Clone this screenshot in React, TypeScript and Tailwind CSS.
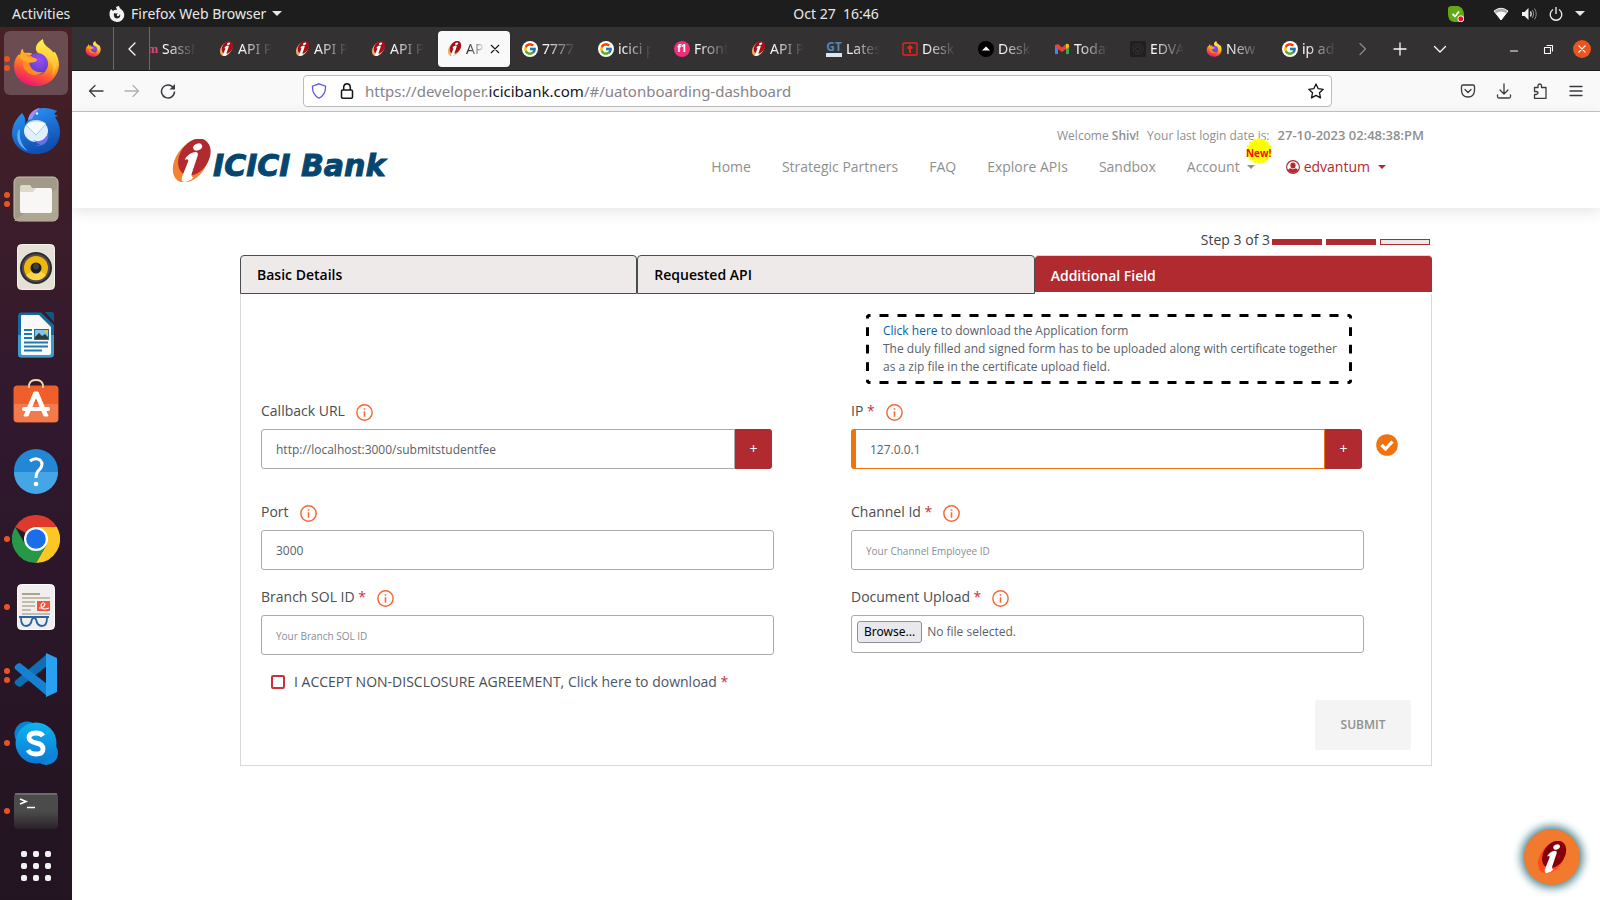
import type { ReactNode } from "react";
import { FcGoogle } from "react-icons/fc";

/* ---------- small pictures ---------- */

function FirefoxLogo({ className }: { className: string }) {
  return (
    <svg viewBox="0 0 46 48" className={className} aria-hidden="true">
      <defs>
        <linearGradient id="ffBody" x1="0.75" y1="0.1" x2="0.3" y2="1">
          <stop offset="0" stopColor="#ffe23a" />
          <stop offset="0.35" stopColor="#ff9a1f" />
          <stop offset="0.65" stopColor="#ff4f3a" />
          <stop offset="1" stopColor="#e8127a" />
        </linearGradient>
        <radialGradient id="ffGlobe" cx="0.6" cy="0.3" r="0.8">
          <stop offset="0" stopColor="#9a4bff" />
          <stop offset="1" stopColor="#4a3fae" />
        </radialGradient>
        <linearGradient id="ffTail" x1="0.5" y1="0" x2="0.5" y2="1">
          <stop offset="0" stopColor="#fff04d" />
          <stop offset="1" stopColor="#ffb02e" />
        </linearGradient>
      </defs>
      <path d="M8 12C9 10 9.500 10 10 10C10 13 11 14 13 14C16 13 19 14 22 17L42 13C45 18 46 22 46 26C45 39 35 47 23 47C11 47 1 39 1 27C1 22 3 18 6 15C6 16 6.500 16 7 16Z" fill="url(#ffBody)" />
      <path d="M23 11C22 5 27 2 30 0C30 7 36 8 40 13C45 19 45 30 39 37C42 30 39 24 36 20C31 17 25 16 23 11Z" fill="url(#ffTail)" />
      <circle cx="24" cy="25" r="11" fill="url(#ffGlobe)" />
      <path d="M13 15C18 16 20 19 24 20C23 23 19 23 16 23C17 30 22 34 30 33C25 38 15 37 11 29C9 24 9 19 13 15Z" fill="#ff8a26" />
      <path d="M6 16C10 14 13 15 15 18C20 19 23 19 24 21C23 24 18 23 16 24C12 21 8 23 6 16Z" fill="#ffa92b" />
    </svg>
  );
}

function ThunderbirdLogo() {
  return (
    <svg viewBox="0 0 48 48" className="size-12" aria-hidden="true">
      <defs>
        <linearGradient id="tb" x1="0" y1="0" x2="0.4" y2="1">
          <stop offset="0" stopColor="#2f9bff" />
          <stop offset="1" stopColor="#0f4fb0" />
        </linearGradient>
      </defs>
      <path d="M10 6C5 11 0 17 0 27C1 39 11 47 24 47C38 47 48 38 48 25C48 18 45 13 43 10L46 9L42 7L45 4C38 1 31 0 25 2C20 4 17 8 16 13L13 18C14 13 13 10 10 6Z" fill="url(#tb)" />
      <path d="M16 13C17 7 21 2 28 1C24 4 22 8 20 12Z" fill="#a58cf5" />
      <path d="M6 24C3 34 9 41 16 44C9 38 7 31 8 22Z" fill="#5fb2ff" />
      <ellipse cx="24" cy="24" rx="12" ry="11" fill="#dff1ff" />
      <path d="M14 18L24 28L34 17C31 13 18 12 14 18Z" fill="#f6fbff" stroke="#8fbdf0" strokeWidth="0.8" />
      <path d="M21 33C27 36 34 33 36 26C38 33 32 41 23 38L28 38Z" fill="#6c6de8" />
      <circle cx="25" cy="6.500" r="1.200" fill="#eaf6ff" />
    </svg>
  );
}

function FilesLogo() {
  return (
    <svg viewBox="0 0 46 46" className="size-[46px]" aria-hidden="true">
      <rect x="1" y="1" width="44" height="44" rx="5" fill="#a19a88" stroke="#c9c2b0" />
      <path d="M1 45L45 12V40Q45 45 40 45Z" fill="#aea793" />
      <path d="M7 11Q7 9 9 9H17L19 12H24V20H7Z" fill="#dedacb" />
      <path d="M7 16H20L23 12H37Q39 12 39 14V35Q39 37 37 37H9Q7 37 7 35Z" fill="#f8f7f5" />
    </svg>
  );
}

function RhythmboxLogo() {
  return (
    <svg viewBox="0 0 38 46" className="h-[46px] w-[38px]" aria-hidden="true">
      <rect x="0.500" y="0.500" width="37" height="45" rx="4" fill="#e6e1d6" stroke="#f5f2eb" />
      <circle cx="19" cy="24" r="16" fill="#2a2d33" />
      <circle cx="19" cy="24" r="14" fill="#5a4a4d" />
      <circle cx="19" cy="24" r="12" fill="#ecb90c" />
      <path d="M9 31A12 12 0 0 0 29 31L19 24Z" fill="#ffd54a" />
      <circle cx="19" cy="24" r="5.500" fill="#1d1f22" />
      <circle cx="19" cy="22.500" r="3" fill="#3d4045" />
    </svg>
  );
}

function WriterLogo() {
  return (
    <svg viewBox="0 0 38 46" className="h-[46px] w-[38px]" aria-hidden="true">
      <path d="M4 0.500H24L37 13V42Q37 45.500 33 45.500H4Q1 45.500 1 42V4Q1 0.500 4 0.500Z" fill="#17689f" />
      <path d="M1 23H37V42Q37 45.500 33 45.500H4Q1 45.500 1 42Z" fill="#3c9bc9" />
      <path d="M28 0H35Q37 0 37 2V10Z" fill="#0d5a83" />
      <path d="M5 3H22L34 15V41Q34 43 32 43H6Q4 43 4 41V4Q4 3 5 3Z" fill="#f9fafa" />
      <path d="M7 18H15M7 22H15M7 26H15M7 30.500H31M7 34.500H31M7 38.500H25" stroke="#2079b0" strokeWidth="1.800" />
      <rect x="17.500" y="17.500" width="14" height="10" fill="#80c4e8" stroke="#1d6fa5" />
      <path d="M18 27V25L22 21L25 24L28 22L31 25V27Z" fill="#2f3b3f" />
      <circle cx="29.500" cy="19.500" r="1.500" fill="#f4c430" />
    </svg>
  );
}

function SoftwareLogo() {
  return (
    <svg viewBox="0 0 46 48" className="h-12 w-[46px]" aria-hidden="true">
      <rect x="0.500" y="6.500" width="45" height="37" rx="4" fill="#ee5f2c" />
      <path d="M1 25H45V40Q45 43 42 43H4Q1 43 1 40Z" fill="#f27a4d" />
      <path d="M16 9V6Q17 1 23 1Q29 1 30 6V9" fill="none" stroke="#f2d8b0" strokeWidth="1.800" />
      <path d="M21 13H25L35 37H31L23 18L15 37H11Z" fill="#fff" stroke="#fff" />
      <rect x="9" y="28" width="28" height="4" rx="2" fill="#fff" />
    </svg>
  );
}

function HelpLogo() {
  return (
    <svg viewBox="0 0 46 46" className="size-[46px]" aria-hidden="true">
      <circle cx="23" cy="23" r="22" fill="#2487d6" />
      <path d="M1 24A22 22 0 0 0 45 24Z" fill="#46a5e4" />
      <path d="M17 13Q22 9 27 12Q31 16 27 21Q23 24 23 30" fill="none" stroke="#fff" strokeWidth="3" />
      <circle cx="23" cy="36" r="2.300" fill="#fff" />
    </svg>
  );
}

function ChromeLogo() {
  return (
    <svg viewBox="0 0 48 48" className="size-12" aria-hidden="true">
      <path d="M24 24L3.200 12A24 24 0 0 1 44.800 12Z" fill="#dd3a2e" />
      <path d="M24 12H44.800A24 24 0 0 1 24 48L34.400 30Z" fill="#fcc624" />
      <path d="M3.200 12L13.600 30L24 36L34.400 30L24 48A24 24 0 0 1 3.200 12Z" fill="#279847" />
      <circle cx="24" cy="24" r="12" fill="#fff" />
      <circle cx="24" cy="24" r="9.800" fill="#1a6fe8" />
    </svg>
  );
}

function DocumentViewerLogo() {
  return (
    <svg viewBox="0 0 38 46" className="h-[46px] w-[38px]" aria-hidden="true">
      <rect x="0.500" y="0.500" width="37" height="45" rx="4" fill="#f1efed" stroke="#fff" />
      <path d="M5 10H23" stroke="#a59b84" strokeWidth="1.800" />
      <path d="M5 14H33M5 18H18M5 22H18M5 26H14M5 30H33" stroke="#c2bcae" strokeWidth="1.800" />
      <rect x="20" y="17" width="13" height="10" fill="#f0533f" />
      <path d="M22 24Q27 24 28 20Q26 17 24 21Q24 27 32 24" fill="none" stroke="#fff" strokeWidth="1.100" />
      <path d="M2 33H32M4 34Q4 42 9 42Q14 42 15 35M19 35Q20 42 25 42Q30 42 30 34M15 35Q17 33 19 35" fill="none" stroke="#2d62a3" strokeWidth="1.800" />
    </svg>
  );
}

function VsCodeLogo() {
  return (
    <svg viewBox="0 0 44 44" className="size-11" aria-hidden="true">
      <path d="M1 28L33 1V13L6 34Q4 34 1 31Q0 29 1 28Z" fill="#0d6fb5" />
      <path d="M1 13Q3 10 6 10L33 31V43L1 16Q0 14 1 13Z" fill="#1482d0" />
      <path d="M32 0L43 5V39L32 44Z" fill="#2aa0f2" />
    </svg>
  );
}

function SkypeLogo() {
  return (
    <svg viewBox="0 0 44 44" className="size-11" aria-hidden="true">
      <defs>
        <linearGradient id="sk" x1="0" y1="0" x2="0" y2="1">
          <stop offset="0" stopColor="#10b3f0" />
          <stop offset="1" stopColor="#0a78d4" />
        </linearGradient>
      </defs>
      <circle cx="13" cy="13" r="12.500" fill="#0a82cf" />
      <circle cx="32" cy="32" r="12" fill="#1183d6" />
      <circle cx="22" cy="22" r="20.500" fill="url(#sk)" />
      <path d="M29 15Q27 12 22 12Q15 12 15 17Q15 20 22 22Q29 23 29 28Q29 33 22 33Q16 33 14 29" fill="none" stroke="#fff" strokeWidth="4.800" />
    </svg>
  );
}

function TerminalLogo() {
  return (
    <svg viewBox="0 0 46 38" className="h-[38px] w-[46px]" aria-hidden="true">
      <defs>
        <linearGradient id="tm" x1="0" y1="0" x2="0" y2="1">
          <stop offset="0.5" stopColor="#4b4b4b" />
          <stop offset="1" stopColor="#2a2229" />
        </linearGradient>
      </defs>
      <rect x="1" y="1" width="44" height="36" rx="4" fill="url(#tm)" />
      <path d="M2 2H44" stroke="#777" strokeWidth="1.500" />
      <path d="M7 7L13 9.500L7 12M14 15.500H22" fill="none" stroke="#fff" strokeWidth="1.600" />
    </svg>
  );
}

function Emblem({ className, disc, edge }: { className: string; disc: string; edge: string }) {
  return (
    <svg viewBox="0 0 117 129" className={className} aria-hidden="true">
      <ellipse cx="57" cy="67" rx="46" ry="70" transform="rotate(34 57 67)" fill={edge} />
      <ellipse cx="67" cy="54" rx="43" ry="60" transform="rotate(34 67 54)" fill={disc} />
      <ellipse cx="77" cy="24" rx="14" ry="10" transform="rotate(-25 77 24)" fill="#fff" />
      <path d="M38 62Q50 41 70 39Q80 39 77 50L59 104Q57 114 65 115Q54 128 37 129Q26 128 30 114L49 66Q50 58 38 62Z" fill="#fff" />
    </svg>
  );
}

function GmailLogo() {
  return (
    <svg viewBox="0 0 16 16" className="size-4" aria-hidden="true">
      <path d="M1 4V13H4V6Z" fill="#4285f4" />
      <path d="M15 4V13H12V6Z" fill="#34a853" />
      <path d="M1 4L4 3L8 6.500L12 3L15 4V6L8 11L1 6Z" fill="#ea4335" />
      <path d="M12 3Q15 2 15 5V6L12 8Z" fill="#fbbc04" />
    </svg>
  );
}

function Caret({ className }: { className: string }) {
  return (
    <svg viewBox="0 0 8 4" className={className} aria-hidden="true">
      <path d="M0 0H8L4 4Z" fill="currentColor" />
    </svg>
  );
}

function Stroke({ d, className, width = 1.3 }: { d: string; className: string; width?: number }) {
  return (
    <svg viewBox="0 0 16 16" className={className} fill="none" stroke="currentColor" strokeWidth={width} strokeLinecap="round" strokeLinejoin="round" aria-hidden="true">
      <path d={d} />
    </svg>
  );
}

/* ---------- desktop ---------- */

function TopBar() {
  return (
    <header className="flex h-[27px] shrink-0 items-center bg-[#1d1d1d] text-sm text-[#e8e8e8]">
      <button className="w-[72px] shrink-0 pl-3 text-left whitespace-nowrap">Activities</button>
      <div className="grid flex-1 grid-cols-[1fr_auto_1fr] items-center">
        <button className="flex items-center gap-[6px] pl-[37px] whitespace-nowrap">
          <svg viewBox="0 0 16 16" className="size-4" aria-hidden="true">
            <path d="M2 3L4 5Q6 3 8 4L7 1Q9 0 10 0Q10 2 13 4Q16 7 15 11Q13 16 8 16Q1 15 0.500 9Q0 6 2 3Z" fill="#f2f2f2" />
            <path d="M5 7Q7 8 9 7Q7 9 8 10Q10 11 11 8Q12 12 8 12.500Q4 12 5 7Z" fill="#1d1d1d" />
          </svg>
          Firefox Web Browser
          <Caret className="h-[5px] w-[10px]" />
        </button>
        <button className="whitespace-pre">Oct 27  16:46</button>
        <div className="flex items-center justify-end pr-[15px]">
          <svg viewBox="0 0 16 16" className="mr-[29px] size-4" aria-hidden="true">
            <path d="M0 3Q0 0 4 0H10Q15 1 16 8V12Q15 16 11 16H6Q0 15 0 8Z" fill="#63a816" />
            <path d="M4.500 8L7 10.500L11 5.500" fill="none" stroke="#fff" strokeWidth="1.800" />
            <circle cx="12.800" cy="12.800" r="3" fill="#e81123" stroke="#fff" />
          </svg>
          <svg viewBox="0 0 16 14" className="mr-3 h-[14px] w-4" aria-hidden="true">
            <path d="M1 4Q8 -1.500 15 4L8 13Z" fill="#aaa" stroke="#f2f2f2" />
            <path d="M3 6Q8 3 13 6L8 13Z" fill="#fff" />
          </svg>
          <svg viewBox="0 0 16 14" className="mr-3 h-[14px] w-4" aria-hidden="true">
            <path d="M1 5H3.500L7.500 1V13L3.500 9H1Z" fill="#f2f2f2" />
            <path d="M9.500 4.500Q11 7 9.500 9.500" fill="none" stroke="#f2f2f2" strokeWidth="1.400" />
            <path d="M11.500 3Q14 7 11.500 11M13.500 1.500Q17 7 13.500 12.500" fill="none" stroke="#888" />
          </svg>
          <svg viewBox="0 0 14 14" className="mr-3 size-[14px]" fill="none" stroke="#f2f2f2" strokeWidth="1.300" aria-hidden="true">
            <path d="M4 2.500A5.800 5.800 0 1 0 10 2.500M7 0V7" />
          </svg>
          <Caret className="h-[5px] w-[10px]" />
        </div>
      </div>
    </header>
  );
}

const dock: { name: string; icon: ReactNode; windows: number; active?: boolean }[] = [
  { name: "Firefox", icon: <FirefoxLogo className="h-12 w-[46px]" />, windows: 2, active: true },
  { name: "Thunderbird", icon: <ThunderbirdLogo />, windows: 0 },
  { name: "Files", icon: <FilesLogo />, windows: 2 },
  { name: "Rhythmbox", icon: <RhythmboxLogo />, windows: 0 },
  { name: "Writer", icon: <WriterLogo />, windows: 0 },
  { name: "Software", icon: <SoftwareLogo />, windows: 0 },
  { name: "Help", icon: <HelpLogo />, windows: 0 },
  { name: "Chrome", icon: <ChromeLogo />, windows: 1 },
  { name: "Document Viewer", icon: <DocumentViewerLogo />, windows: 1 },
  { name: "Code", icon: <VsCodeLogo />, windows: 2 },
  { name: "Skype", icon: <SkypeLogo />, windows: 1 },
  { name: "Terminal", icon: <TerminalLogo />, windows: 1 },
];

function Dock() {
  return (
    <nav aria-label="Dock" className="flex w-[72px] shrink-0 flex-col items-center bg-linear-to-b from-[#472125] via-[#30182e] via-45% to-[#221420] pt-[2px]">
      {dock.map((app) => (
        <button key={app.name} aria-label={app.name} className="relative flex h-[68px] w-full items-center justify-center px-1">
          <span className={app.active ? "flex size-16 items-center justify-center rounded-md bg-white/20" : "flex size-16 items-center justify-center"}>{app.icon}</span>
          <span className="absolute inset-y-0 left-1 flex flex-col justify-center gap-[3px]">
            {Array.from({ length: app.windows }, (_, i) => (
              <span key={i} className="size-[6px] rounded-full bg-[#e95420]" />
            ))}
          </span>
        </button>
      ))}
      <button aria-label="Show Applications" className="grid grid-cols-3 gap-[6px] py-[6px]">
        {Array.from({ length: 9 }, (_, i) => (
          <span key={i} className="size-[6px] rounded-[2px] bg-[#f2f2f2]" />
        ))}
      </button>
    </nav>
  );
}

/* ---------- browser chrome ---------- */

const google = <span className="flex size-4 items-center justify-center rounded-full bg-white"><FcGoogle className="size-[14px]" /></span>;
const bank = <Emblem className="size-[15px]" disc="#a31116" edge="#f3a56a" />;
const triangle = (
  <span className="flex size-4 items-center justify-center rounded-full bg-black"><Caret className="h-[7px] w-2 rotate-180 text-white" /></span>
);

const tabs: { icon: ReactNode; text: string; active?: boolean }[] = [
  { icon: <span className="w-4 text-right font-['Liberation_Serif',serif] text-[13px] leading-4 font-bold text-[#cf4a83]">m</span>, text: "SassM" },
  { icon: bank, text: "API P" },
  { icon: bank, text: "API P" },
  { icon: bank, text: "API P" },
  { icon: bank, text: "API", active: true },
  { icon: google, text: "7777" },
  { icon: google, text: "icici p" },
  { icon: <span className="flex size-4 items-center justify-center rounded-full bg-[#f02e7a] text-[10px] font-bold text-white">f1</span>, text: "Front" },
  { icon: bank, text: "API P" },
  { icon: <span className="w-4 border-b-4 border-[#dce6f0] text-center text-[12px] leading-3 font-bold text-[#4f86b5]">GT</span>, text: "Lates" },
  {
    icon: (
      <svg viewBox="0 0 16 16" className="size-4" fill="none" stroke="#e8261c" aria-hidden="true">
        <rect x="1" y="2" width="14" height="12" rx="1" strokeWidth="1.300" />
        <path d="M8 12V6M5.500 7.500L8 5L10.500 7.500" strokeWidth="1.900" />
      </svg>
    ),
    text: "Desk",
  },
  { icon: triangle, text: "Desk" },
  { icon: <GmailLogo />, text: "Today" },
  {
    icon: (
      <svg viewBox="0 0 16 16" className="size-4" aria-hidden="true">
        <rect width="16" height="16" rx="2" fill="#211f20" />
        <circle cx="8" cy="8" r="5" fill="none" stroke="#393536" />
        <circle cx="8" cy="8" r="2.500" fill="none" stroke="#393536" />
      </svg>
    ),
    text: "EDVA",
  },
  { icon: <FirefoxLogo className="size-4" />, text: "New" },
  { icon: google, text: "ip ad" },
];

function TabStrip() {
  return (
    <div className="flex h-11 shrink-0 items-stretch border-b border-[#1c1b1c] bg-[#333132] text-[#fbfbfe]">
      <button aria-label="Pinned tab" className="flex w-[42px] items-center justify-center border-r border-[#6b6a6b]">
        <FirefoxLogo className="size-4" />
      </button>
      <button aria-label="Scroll tabs left" className="flex w-9 items-center justify-center border-r border-[#6b6a6b]">
        <Stroke d="M11 2L5 8L11 14" className="size-4" />
      </button>
      <div role="tablist" className="flex min-w-0 flex-1 justify-end overflow-hidden">
        {tabs.map((tab, i) => (
          <div key={i} role="tab" aria-selected={!!tab.active} className="flex w-[76px] shrink-0 items-center p-[2px]">
            <div className={tab.active ? "flex h-9 w-full items-center gap-1 rounded bg-[#f9f9fa] px-2 text-[#15141a] shadow" : "flex h-9 w-full items-center gap-1 px-2"}>
              <span className="flex w-4 shrink-0 justify-center">{tab.icon}</span>
              <span className={tab.active ? "w-5 overflow-hidden mask-r-from-0% text-sm whitespace-nowrap" : "w-[34px] overflow-hidden mask-r-from-10% text-sm whitespace-nowrap"}>{tab.text}</span>
              {tab.active && (
                <button aria-label="Close tab" className="-ml-px"><Stroke d="M3 3L13 13M13 3L3 13" className="size-3" width={1.5} /></button>
              )}
            </div>
          </div>
        ))}
      </div>
      <button aria-label="Scroll tabs right" className="flex w-[30px] items-center justify-center text-[#8a898a]"><Stroke d="M5 2.500L10.500 8L5 13.500" className="size-4" /></button>
      <button aria-label="New tab" className="flex w-11 items-center justify-center"><Stroke d="M8 2V14M2 8H14" className="size-4" /></button>
      <button aria-label="List all tabs" className="mr-[38px] flex w-9 items-center justify-center"><Stroke d="M2.500 5.500L8 11L13.500 5.500" className="size-4" /></button>
      <button aria-label="Minimize" className="flex w-9 items-center justify-center"><Stroke d="M4.500 10H11.500" className="size-4" width={1.2} /></button>
      <button aria-label="Restore" className="flex w-8 items-center justify-center">
        <Stroke d="M4.500 6.500H10.500V12.500H4.500ZM7 4.500H12.500V10" className="size-4" width={1.1} />
      </button>
      <button aria-label="Close window" className="flex w-9 items-center justify-center">
        <span className="flex size-[18px] items-center justify-center rounded-full bg-[#e95420]"><Stroke d="M3 3L13 13M13 3L3 13" className="size-[10px]" width={2} /></span>
      </button>
    </div>
  );
}

function Toolbar() {
  return (
    <div className="flex h-[41px] shrink-0 items-center border-b border-[#c4c4c6] bg-[#f9f9fa] text-[#3b3a40]">
      <div className="flex w-[231px] items-center gap-5 pl-4">
        <button aria-label="Back"><Stroke d="M15 8H1.500M7 2.500L1.500 8L7 13.500" className="size-4" /></button>
        <button aria-label="Forward" className="text-[#b0b0b3]"><Stroke d="M1 8H14.500M9 2.500L14.500 8L9 13.500" className="size-4" /></button>
        <button aria-label="Reload">
          <svg viewBox="0 0 16 16" className="size-4" fill="none" stroke="currentColor" strokeWidth="1.500" aria-hidden="true">
            <path d="M13.500 5A6.500 6.500 0 1 0 14.500 8.500" />
            <path d="M15 1V6.500H9.500Z" fill="currentColor" stroke="none" />
          </svg>
        </button>
      </div>
      <div className="flex h-8 flex-1 items-center rounded-[4px] border border-[#bcbcbe] bg-white px-[7px]">
        <svg viewBox="0 0 16 16" className="mr-3 size-4" fill="none" stroke="#5b5bdf" strokeWidth="1.300" aria-hidden="true">
          <path d="M8 0.800L14.500 3.200Q15 11.500 8 15.300Q1 11.500 1.500 3.200Z" />
        </svg>
        <svg viewBox="0 0 16 16" className="mr-[10px] size-4 text-[#15141a]" fill="none" stroke="currentColor" strokeWidth="1.500" aria-hidden="true">
          <rect x="2.500" y="7" width="11" height="8.200" rx="1.200" />
          <path d="M4.700 7V4Q5 0.800 8 0.800Q11 0.800 11.300 4V7" />
        </svg>
        <span className="flex-1 text-[15px] text-[#85848a]">
          https://developer.<span className="text-[#15141a]">icicibank.com</span>/#/uatonboarding-dashboard
        </span>
        <button aria-label="Bookmark this page">
          <Stroke d="M8 1L10.200 5.700L15.200 6.300L11.500 9.800L12.500 14.900L8 12.400L3.500 14.900L4.500 9.800L0.800 6.300L5.800 5.700Z" className="size-4 text-[#15141a]" />
        </button>
      </div>
      <div className="flex w-[268px] items-center justify-end gap-5 pr-4">
        <button aria-label="Save to Pocket"><Stroke d="M3 2H13Q14.500 2 14.500 3.500V7.500Q14 14 8 14Q2 14 1.500 7.500V3.500Q1.500 2 3 2ZM5 6.500L8 9.500L11 6.500" className="size-4" /></button>
        <button aria-label="Downloads"><Stroke d="M8 1V10.500M4 7L8 11L12 7M1.500 12V13.500Q1.500 15 3 15H13Q14.500 15 14.500 13.500V12" className="size-4" /></button>
        <button aria-label="Extensions"><Stroke d="M2.500 4.500H6V3Q6 1 8 1Q9.500 1 9.500 3V4.500H14V15.300H2.500V11.500H4Q6 11 6 10Q6 8.500 4 8.500H2.500Z" className="size-4" /></button>
        <button aria-label="Menu"><Stroke d="M2 3.500H14M2 8H14M2 12.500H14" className="size-4" /></button>
      </div>
    </div>
  );
}

/* ---------- bank site ---------- */

function SiteHeader() {
  return (
    <header className="flex h-24 shrink-0 items-start justify-between bg-white pr-44 pl-[100px] text-sm text-[#8f8f8f] shadow-[0_4px_14px_rgba(0,0,0,0.1)]">
      <a href="#/" className="flex items-end gap-[2px] pt-[27px] whitespace-nowrap">
        <Emblem className="h-[43px] w-[39px]" disc="#b02a30" edge="#f58233" />
        <span className="font-['DejaVu_Sans',sans-serif] text-[30px] leading-8 font-bold text-[#04466f] italic [-webkit-text-stroke:1px_#04466f]">ICICI Bank</span>
      </a>
      <div className="flex flex-col items-end gap-3 pt-[15px]">
        <p className="flex h-[18px] items-center gap-2 text-xs whitespace-nowrap">
          <span>Welcome <b className="font-semibold">Shiv!</b></span>
          <span>Your last login date is:</span>
          <b className="text-[13px] font-semibold">27-10-2023 02:48:38:PM</b>
        </p>
        <nav className="flex h-5 items-center gap-[31px] pr-[38px] whitespace-nowrap">
          <a href="#home">Home</a>
          <a href="#partners">Strategic Partners</a>
          <a href="#faq">FAQ</a>
          <a href="#apis">Explore APIs</a>
          <a href="#sandbox">Sandbox</a>
          <button className="relative flex items-center gap-[7px]">
            Account
            <Caret className="h-1 w-2" />
            <span className="absolute -top-5 -right-[18px] flex size-7 items-center justify-center">
              <svg viewBox="-14 -14 28 28" className="absolute size-7" fill="#ffff00" aria-hidden="true">
                <rect x="-9.500" y="-9.500" width="19" height="19" />
                <rect x="-9.500" y="-9.500" width="19" height="19" transform="rotate(22.500)" />
                <rect x="-9.500" y="-9.500" width="19" height="19" transform="rotate(45)" />
                <rect x="-9.500" y="-9.500" width="19" height="19" transform="rotate(67.500)" />
              </svg>
              <span className="relative pt-1 text-[10px] font-bold text-[#f01010]">New!</span>
            </span>
          </button>
          <button className="flex items-center gap-1 font-medium text-[#b02a30]">
            <svg viewBox="0 0 16 16" className="size-[14px]" aria-hidden="true">
              <circle cx="8" cy="8" r="7.300" fill="none" stroke="currentColor" strokeWidth="1.300" />
              <ellipse cx="8" cy="6.300" rx="3" ry="3.500" fill="currentColor" />
              <path d="M2 12Q3 9.500 5.500 9.500Q8 11.500 10.500 9.500Q13 9.500 14 12Q8 17.500 2 12Z" fill="currentColor" />
            </svg>
            edvantum
            <Caret className="ml-1 h-1 w-2" />
          </button>
        </nav>
      </div>
    </header>
  );
}

function Label({ id, text, required }: { id: string; text: string; required?: boolean }) {
  return (
    <div className="mb-2 flex h-5 items-center gap-[11px]">
      <label htmlFor={id}>
        {text}
        {required && <span className="text-[#c8323c]"> *</span>}
      </label>
      <svg viewBox="0 0 16 16" className="mt-[3px] size-[17px]" fill="none" stroke="#f26a3d" strokeWidth="1.400" aria-hidden="true">
        <circle cx="8" cy="8" r="7.200" />
        <path d="M8 6.800V12M8 4V5.500" strokeWidth="1.500" />
      </svg>
    </div>
  );
}

/* Long dashes on all four sides, each side starting and ending on a half dash. */
function DashedFrame() {
  return (
    <svg className="absolute inset-0 size-full" stroke="#000" strokeWidth="6" aria-hidden="true">
      <line x1="0" y1="0" x2="100%" y2="0" pathLength={486} strokeDasharray="9 9" strokeDashoffset="4.500" />
      <line x1="0" y1="100%" x2="100%" y2="100%" pathLength={486} strokeDasharray="9 9" strokeDashoffset="4.500" />
      <line x1="0" y1="0" x2="0" y2="100%" pathLength={72} strokeDasharray="9 9" strokeDashoffset="4.500" />
      <line x1="100%" y1="0" x2="100%" y2="100%" pathLength={72} strokeDasharray="9 9" strokeDashoffset="4.500" />
    </svg>
  );
}

const box = "h-10 w-full min-w-0 rounded-[3px] border border-[#a9abad] bg-white px-[14px] text-xs text-[#5a6068] outline-none placeholder:text-[10px] placeholder:text-[#868e96]";

function PlusButton({ label }: { label: string }) {
  return (
    <button type="button" aria-label={label} className="h-10 w-[37px] shrink-0 rounded-r-[3px] bg-[#b02a30] text-sm text-white">+</button>
  );
}

function OnboardingForm() {
  return (
    <form className="flex flex-col border-x border-b border-[#d9d9d9] px-5 pt-5 pb-[15px] text-sm text-[#4a4d52]" onSubmit={(e) => e.preventDefault()}>
      <div className="grid grid-cols-2 gap-x-[30px]">
        <div className="relative col-start-2 mr-[59px] ml-[15px] overflow-hidden rounded-[4px] py-2 pr-2 pl-[17px] text-xs leading-[18px] text-[#5a6068]">
          <DashedFrame />
          <p className="relative"><a href="#form" className="text-[#0b5fa5]">Click here</a> to download the Application form</p>
          <p className="relative">The duly filled and signed form has to be uploaded along with certificate together as a zip file in the certificate upload field.</p>
        </div>
      </div>
      <div className="mt-[17px] grid grid-cols-2 gap-x-[30px]">
        <div className="mr-[49px]">
          <Label id="callback" text="Callback URL" />
          <div className="flex">
            <input id="callback" defaultValue="http://localhost:3000/submitstudentfee" className={`${box} rounded-r-none`} />
            <PlusButton label="Add callback URL" />
          </div>
        </div>
        <div>
          <Label id="ip" text="IP" required />
          <div className="flex">
            <input id="ip" defaultValue="127.0.0.1" className="h-10 w-full min-w-0 rounded-l-[3px] border border-l-5 border-[#f0730f] bg-white px-[14px] text-xs text-[#5a6068] outline-none" />
            <PlusButton label="Add IP" />
            <svg viewBox="0 0 22 22" className="mt-[5px] mr-[13px] ml-[14px] size-[22px] shrink-0" aria-hidden="true">
              <circle cx="11" cy="11" r="10.800" fill="#f0730f" />
              <path d="M5.500 11L9.500 15L16.500 7.500" fill="none" stroke="#fff" strokeWidth="3.200" />
            </svg>
          </div>
        </div>
      </div>
      <div className="mt-[33px] grid grid-cols-2 gap-x-[30px] gap-y-[17px]">
        <div className="mr-[47px]">
          <Label id="port" text="Port" />
          <input id="port" defaultValue="3000" className={box} />
        </div>
        <div className="mr-[47px]">
          <Label id="channel" text="Channel Id" required />
          <input id="channel" placeholder="Your Channel Employee ID" className={box} />
        </div>
        <div className="mr-[47px]">
          <Label id="branch" text="Branch SOL ID" required />
          <input id="branch" placeholder="Your Branch SOL ID" className={box} />
        </div>
        <div className="mr-[47px]">
          <Label id="document" text="Document Upload" required />
          <div className="relative flex h-[38px] items-start rounded-[3px] border border-[#a9abad] px-[5px] pt-[5px] text-xs text-[#5a6068]">
            <input id="document" type="file" className="sr-only" />
            <label htmlFor="document" className="flex items-center gap-[5px]">
              <span className="flex h-[22px] items-center rounded-[3px] border border-[#8f8f9d] bg-[#e9e9ed] px-[6px] font-['Noto_Sans',sans-serif] text-xs text-black">Browse...</span>
              No file selected.
            </label>
          </div>
        </div>
      </div>
      <div className="mt-[17px] flex h-5 items-center gap-[9px] pl-[10px]">
        <input id="nda" type="checkbox" className="size-[14px] appearance-none rounded-[2px] border-2 border-[#c8323c] bg-white" />
        <label htmlFor="nda">
          I ACCEPT NON-DISCLOSURE AGREEMENT, <a href="#nda" className="text-[#4a5568]">Click here to download</a>
          <span className="text-[#c8323c]"> *</span>
        </label>
      </div>
      <button type="submit" disabled className="mt-2 h-[50px] w-24 self-end rounded-[3px] bg-[#f4f4f4] text-xs font-semibold text-[#8f8f8f]">SUBMIT</button>
    </form>
  );
}

function Site() {
  return (
    <div className="flex flex-1 flex-col bg-white font-['Open_Sans',sans-serif]">
      <SiteHeader />
      <main className="mx-auto w-full max-w-[1192px] pt-[22px]">
        <div className="flex h-[25px] items-start justify-end gap-1 text-sm text-[#3f4145]">
          <span className="-mr-[2px] leading-5">Step 3 of 3</span>
          <span className="mt-[9px] h-[6px] w-[50px] bg-[#b02a30]" />
          <span className="mt-[9px] h-[6px] w-[50px] bg-[#b02a30]" />
          <span className="mt-[9px] mr-[2px] h-[6px] w-[50px] border border-[#b02a30] bg-[#ece8ea]" />
        </div>
        <div role="tablist" className="grid h-[39px] grid-cols-3 items-start text-left text-sm font-semibold">
          <button role="tab" aria-selected="false" className="h-[39px] rounded-t-[4px] border border-[#4a4d50] bg-[#eeeae9] px-4 text-left text-black">Basic Details</button>
          <button role="tab" aria-selected="false" className="h-[39px] rounded-t-[4px] border border-[#4a4d50] bg-[#eeeae9] px-4 text-left text-black">Requested API</button>
          <button role="tab" aria-selected="true" className="h-[37px] rounded-t-[4px] border-t border-[#d9d9d9] bg-[#b02a30] px-4 pt-[3px] text-left text-white">Additional Field</button>
        </div>
        <OnboardingForm />
      </main>
      <button aria-label="Assistant" className="fixed right-5 bottom-[15px] flex size-14 items-center justify-center rounded-full bg-[#f27a2e] shadow-[0_0_9px_3px_#4d8590]">
        <Emblem className="size-8" disc="#850008" edge="#ff4a1c" />
      </button>
    </div>
  );
}

export default function App() {
  return (
    <div className="flex min-h-screen flex-col font-['Noto_Sans',sans-serif]">
      <TopBar />
      <div className="flex flex-1">
        <Dock />
        <div className="flex min-w-0 flex-1 flex-col">
          <TabStrip />
          <Toolbar />
          <Site />
        </div>
      </div>
    </div>
  );
}
